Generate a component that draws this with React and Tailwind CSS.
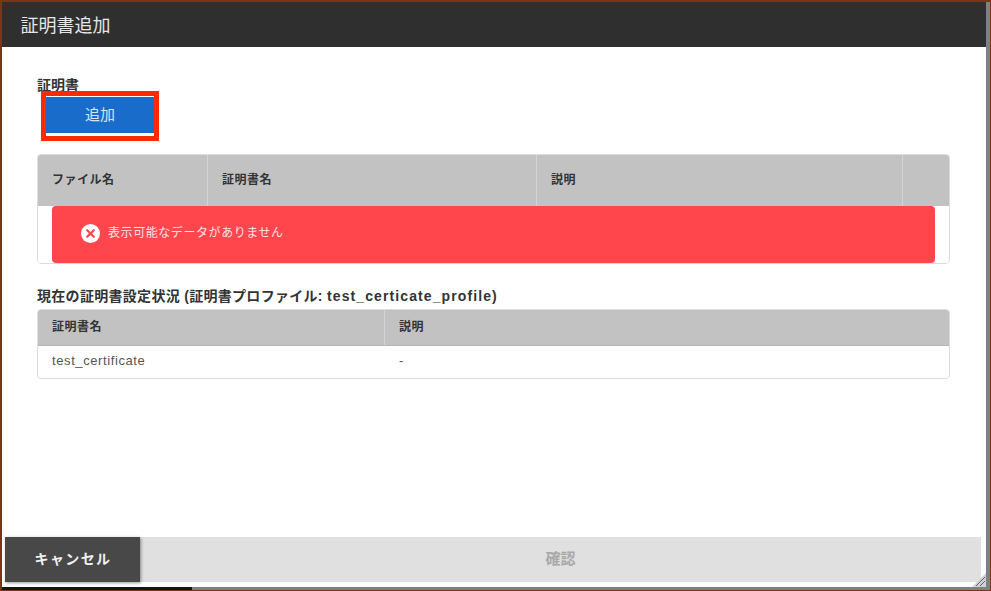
import React from "react";

const fontStack = { fontFamily: '"Liberation Sans", "Noto Sans CJK JP", sans-serif' };

const HeaderCell = ({ width, children, last }) => (
  <div className={`${width} flex items-center pl-[14px] pb-px text-[12px] font-bold tracking-[0.5px] text-[#333] ${last ? "" : "border-r border-[#d4d4d4]"}`}>{children}</div>
);

const ErrorIcon = () => (
  <svg width="19" height="19" viewBox="0 0 19 19" className="shrink-0">
    <circle cx="9.5" cy="9.5" r="9.5" fill="#ffffff" />
    <path d="M6.2 6.2 12.8 12.8 M12.8 6.2 6.2 12.8" stroke="#ff464d" strokeWidth="2.2" strokeLinecap="round" />
  </svg>
);

const App = () => {
  return (
    <div className="relative flex h-[591px] w-[991px] overflow-hidden bg-[#7a3512] pt-[2px] pl-[2px] pr-px pb-px" style={fontStack}>
      <div className="flex min-w-0 flex-1 flex-col">
        <div className="flex min-h-0 flex-1">
          <div className="relative flex min-w-0 flex-1 flex-col bg-white">
            <div className="flex h-[45px] shrink-0 items-center bg-[#2f2f2f] pl-[18.5px] pt-[3px] text-[18px] text-[#e6e6e6]">証明書追加</div>
            <div className="flex min-h-0 flex-1 flex-col px-[35px] pt-[30px]">
              <div className="h-[14px] text-[14px] font-bold leading-[16px] text-[#333]">証明書</div>
              <div className="ml-[4px] mt-0 h-[50px] w-[118px] border-[5px] border-[#ff2a00] bg-white py-px">
                <div className="flex h-[36px] items-center justify-center bg-[#1a6ccb] text-[15px] text-[#d5e4f6]">追加</div>
              </div>
              <div className="mt-[13px] flex h-[110px] w-[913px] flex-col overflow-hidden rounded-[4px] border border-[#dcdcdc]">
                <div className="flex h-[51px] shrink-0 bg-[#c2c2c2]">
                  <HeaderCell width="w-[170px]">ファイル名</HeaderCell>
                  <HeaderCell width="w-[329px]">証明書名</HeaderCell>
                  <HeaderCell width="w-[366px]">説明</HeaderCell>
                  <HeaderCell width="flex-1" last />
                </div>
                <div className="flex-1 bg-white px-[14px]">
                  <div className="flex h-[57px] items-center gap-[8px] rounded-[4px] bg-[#ff464d] pb-[3px] pl-[29px] text-[12px] tracking-[0.57px] text-[#fde3e5]">
                    <ErrorIcon />
                    <span>表示可能なデータがありません</span>
                  </div>
                </div>
              </div>
              <div className="mt-[25px] text-[14px] font-bold leading-[15px] tracking-[0.3px] text-[#333]">
                現在の証明書設定状況 (証明書プロファイル: <span className="tracking-[1.1px]">test_certicate_profile)</span>
              </div>
              <div className="mt-[5px] flex h-[70px] w-[913px] flex-col overflow-hidden rounded-[4px] border border-[#dcdcdc]">
                <div className="flex h-[35px] shrink-0 bg-[#c2c2c2]">
                  <HeaderCell width="w-[347px]">証明書名</HeaderCell>
                  <HeaderCell width="flex-1" last>説明</HeaderCell>
                </div>
                <div className="flex flex-1 items-center border-t border-[#b5b5b5] pb-[2px] text-[13px] tracking-[0.6px] text-[#555]">
                  <div className="w-[347px] pl-[14px]">test_certificate</div>
                  <div className="pl-[14px]">-</div>
                </div>
              </div>
            </div>
            <div className="mb-[5px] flex h-[45px] shrink-0 pl-[3px] pr-[5px]">
              <div className="z-10 flex w-[135px] items-center justify-center bg-[#484848] pl-px text-[14px] font-bold tracking-[1.4px] text-[#f2f2f2] shadow-[1px_1px_3px_rgba(0,0,0,0.4)]">キャンセル</div>
              <div className="flex flex-1 items-center justify-center bg-[#e0e0e0] text-[15px] font-bold text-[#a8a8a8]">確認</div>
            </div>
            <svg width="14" height="14" viewBox="0 0 14 14" className="absolute bottom-0 right-0">
              <path d="M14 0V14H0Z" fill="#d0d0d0" />
              <path d="M4 13 13 4 M8 13 13 8" stroke="#666" strokeWidth="1" />
            </svg>
          </div>
          <div className="w-[4px] shrink-0 bg-[#808080]" />
        </div>
        <div className="flex h-[3px] shrink-0">
          <div className="w-[190px] bg-[#151515]" />
          <div className="flex-1 bg-[#808080]" />
        </div>
      </div>
    </div>
  );
};

export default App;
